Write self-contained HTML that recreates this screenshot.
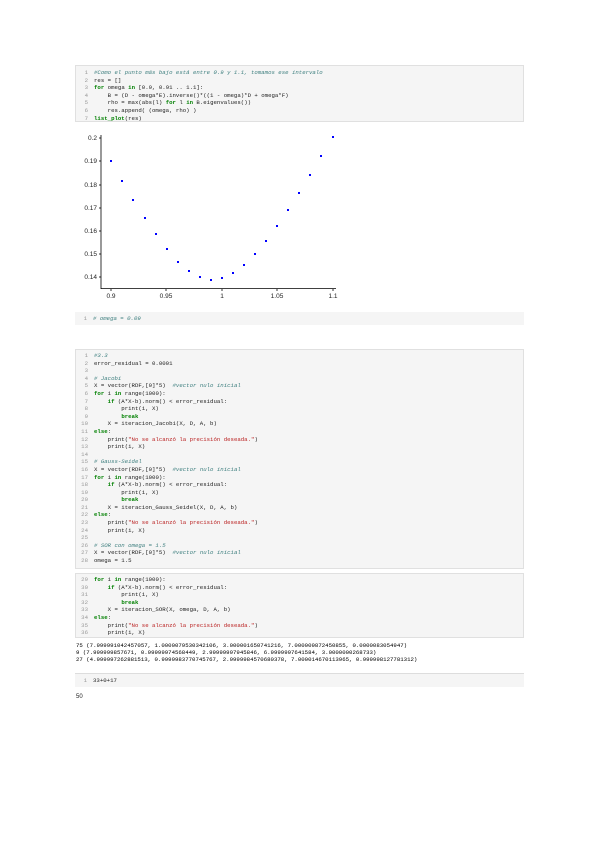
<!DOCTYPE html>
<html><head><meta charset="utf-8"><style>
body{margin:0;width:600px;height:848px;background:#fff;position:relative;overflow:hidden;font-family:"Liberation Mono",monospace;}
.cell{position:absolute;left:75px;width:449px;background:#f5f5f5;border:1px solid #e0e0e0;box-sizing:border-box;}
pre{margin:0;font-family:"Liberation Mono",monospace;font-size:5.7px;line-height:7.6px;color:#222;white-space:pre;}
.ln{position:absolute;left:4px;color:#999;text-align:right;width:8px;}
.code{position:absolute;left:18px;}
.k{color:#008000;font-weight:bold}.c{color:#408080;font-style:italic}.s{color:#ba2121}.n{color:#080}
.out{position:absolute;left:76px;font-size:5.7px;line-height:7px;color:#000;}
.t{position:absolute;font-family:"Liberation Sans",sans-serif;font-size:6px;color:#222;}
</style></head><body>
<div class="cell" style="top:65px;height:57px">
<pre class="ln" style="top:3px">1
2
3
4
5
6
7</pre>
<pre class="code" style="top:3px"><span class="c">#Como el punto más bajo está entre 0.9 y 1.1, tomamos ese intervalo</span>
res = []
<span class="k">for</span> omega <span class="k">in</span> [0.9, 0.91 .. 1.1]:
    B = (D - omega*E).inverse()*((1 - omega)*D + omega*F)
    rho = max(abs(l) <span class="k">for</span> l <span class="k">in</span> B.eigenvalues())
    res.append( (omega, rho) )
<span class="k">list_plot</span>(res)</pre>
</div>
<svg style="position:absolute;left:0;top:0" width="600" height="310">
<g stroke="#000" stroke-width="0.8">
<line x1="101" y1="135" x2="101" y2="289"/><line x1="101" y1="288.5" x2="336" y2="288.5"/>
<g>
<line x1="99" y1="138" x2="101" y2="138"/><line x1="99" y1="161" x2="101" y2="161"/><line x1="99" y1="185" x2="101" y2="185"/><line x1="99" y1="208" x2="101" y2="208"/><line x1="99" y1="231" x2="101" y2="231"/><line x1="99" y1="254" x2="101" y2="254"/><line x1="99" y1="277" x2="101" y2="277"/>
<line x1="111" y1="289" x2="111" y2="291"/><line x1="166" y1="289" x2="166" y2="291"/><line x1="222" y1="289" x2="222" y2="291"/><line x1="277" y1="289" x2="277" y2="291"/><line x1="333" y1="289" x2="333" y2="291"/>
</g></g>
<g fill="#222" font-family="Liberation Sans" font-size="6.5" text-anchor="end">
<text x="97" y="140">0.2</text><text x="97" y="163">0.19</text><text x="97" y="187">0.18</text><text x="97" y="210">0.17</text><text x="97" y="233">0.16</text><text x="97" y="256">0.15</text><text x="97" y="279">0.14</text>
</g>
<g fill="#222" font-family="Liberation Sans" font-size="6.5" text-anchor="middle">
<text x="111" y="298">0.9</text><text x="166" y="298">0.95</text><text x="222" y="298">1</text><text x="277" y="298">1.05</text><text x="333" y="298">1.1</text>
</g>
<g fill="#00f">
<rect x="110" y="160" width="2" height="2"/><rect x="121" y="180" width="2" height="2"/><rect x="132" y="199" width="2" height="2"/><rect x="144" y="217" width="2" height="2"/><rect x="155" y="233" width="2" height="2"/><rect x="166" y="248" width="2" height="2"/><rect x="177" y="261" width="2" height="2"/><rect x="188" y="270" width="2" height="2"/><rect x="199" y="276" width="2" height="2"/><rect x="210" y="279" width="2" height="2"/><rect x="221" y="277" width="2" height="2"/><rect x="232" y="272" width="2" height="2"/><rect x="243" y="264" width="2" height="2"/><rect x="254" y="253" width="2" height="2"/><rect x="265" y="240" width="2" height="2"/><rect x="276" y="225" width="2" height="2"/><rect x="287" y="209" width="2" height="2"/><rect x="298" y="192" width="2" height="2"/><rect x="309" y="174" width="2" height="2"/><rect x="320" y="155" width="2" height="2"/><rect x="332" y="136" width="2" height="2"/>
</g></svg>
<div class="cell" style="top:312px;height:13px;border:none">
<pre class="ln" style="top:3px">1</pre><pre class="code" style="top:3px"><span class="c"># omega = 0.09</span></pre></div>
<div class="cell" style="top:349px;height:220px">
<pre class="ln" style="top:2px">1
2
3
4
5
6
7
8
9
10
11
12
13
14
15
16
17
18
19
20
21
22
23
24
25
26
27
28</pre>
<pre class="code" style="top:2px"><span class="c">#3.3</span>
error_residual = 0.0001

<span class="c"># Jacobi</span>
X = vector(RDF,[0]*5)  <span class="c">#vector nulo inicial</span>
<span class="k">for</span> i <span class="k">in</span> range(1000):
    <span class="k">if</span> (A*X-b).norm() &lt; error_residual:
        print(i, X)
        <span class="k">break</span>
    X = iteracion_Jacobi(X, D, A, b)
<span class="k">else</span>:
    print(<span class="s">"No se alcanzó la precisión deseada."</span>)
    print(i, X)

<span class="c"># Gauss-Seidel</span>
X = vector(RDF,[0]*5)  <span class="c">#vector nulo inicial</span>
<span class="k">for</span> i <span class="k">in</span> range(1000):
    <span class="k">if</span> (A*X-b).norm() &lt; error_residual:
        print(i, X)
        <span class="k">break</span>
    X = iteracion_Gauss_Seidel(X, D, A, b)
<span class="k">else</span>:
    print(<span class="s">"No se alcanzó la precisión deseada."</span>)
    print(i, X)

<span class="c"># SOR con omega = 1.5</span>
X = vector(RDF,[0]*5)  <span class="c">#vector nulo inicial</span>
omega = 1.5</pre></div>
<div class="cell" style="top:573px;height:65px">
<pre class="ln" style="top:2px">29
30
31
32
33
34
35
36</pre>
<pre class="code" style="top:2px"><span class="k">for</span> i <span class="k">in</span> range(1000):
    <span class="k">if</span> (A*X-b).norm() &lt; error_residual:
        print(i, X)
        <span class="k">break</span>
    X = iteracion_SOR(X, omega, D, A, b)
<span class="k">else</span>:
    print(<span class="s">"No se alcanzó la precisión deseada."</span>)
    print(i, X)</pre></div>
<pre class="out" style="top:642px">75 (7.999991042457057, 1.0000079530342106, 3.000001650741216, 7.000009872450855, 0.0000083054947)
9 (7.999999857671, 0.99999974568449, 2.99999997945846, 6.9999997641584, 3.0000000268733)
27 (4.999997262881513, 0.9999983770745767, 2.9999984570680378, 7.000014670113965, 0.999998127781312)</pre>
<div class="cell" style="top:673px;height:14px;border:none;border-top:1px solid #ddd">
<pre class="ln" style="top:3px">1</pre><pre class="code" style="top:3px">33+0+17</pre></div>
<div class="t" style="left:76px;top:694px">50</div>
</body></html>
